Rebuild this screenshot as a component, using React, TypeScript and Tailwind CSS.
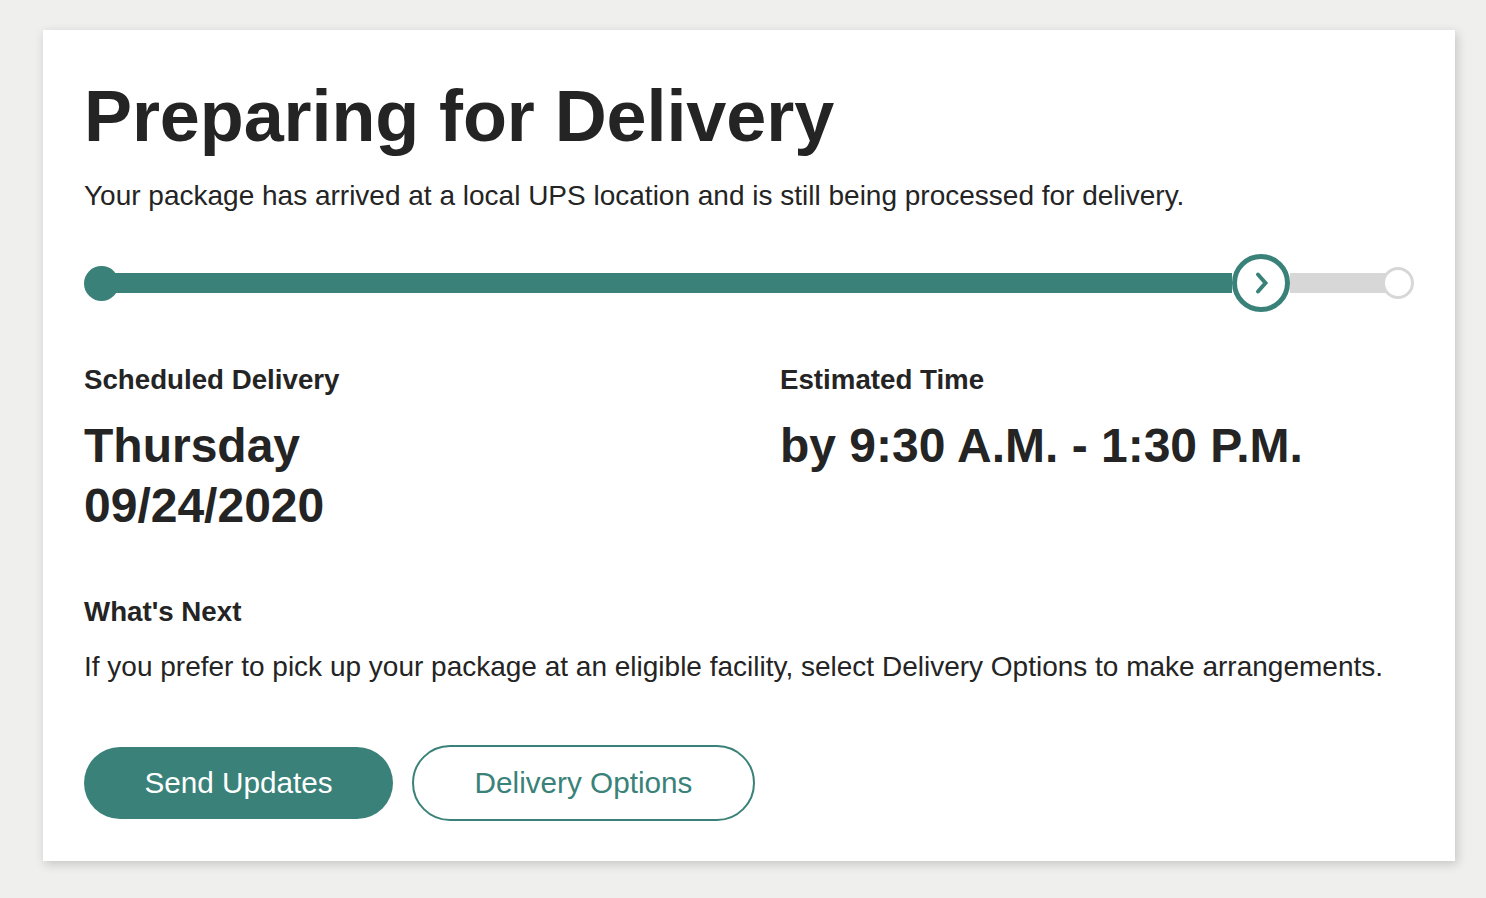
const teal = "#3a8279"

function Progress() {
  return (
    <div className="flex h-[58px] items-center">
      <div className="h-[35px] w-[35px] shrink-0 rounded-full bg-[#3a8279]" />
      <div className="-ml-2 h-5 flex-1 bg-[#3a8279]" />
      <div className="flex h-[58px] w-[58px] shrink-0 items-center justify-center rounded-full border-[5px] border-[#3a8279] bg-white">
        <svg width="20" height="24" viewBox="0 0 20 24" fill="none" className="ml-[2px]">
          <polyline
            points="6,3.5 13.5,12 6,20.5"
            stroke={teal}
            strokeWidth="4"
            strokeLinecap="round"
            strokeLinejoin="miter"
          />
        </svg>
      </div>
      <div className="h-5 w-[96px] shrink-0 bg-[#d7d7d7]" />
      <div className="-ml-1 h-8 w-8 shrink-0 rounded-full border-[3px] border-[#d7d7d7] bg-white" />
    </div>
  )
}

export default function App() {
  return (
    <div className="min-h-screen bg-[#efefee] pl-[43px] pt-[30px] font-['Liberation_Sans',Arial,sans-serif] text-[#242424]">
      <div className="w-[1412px] bg-white px-[41px] pb-[40px] pt-[46px] shadow-[2px_3px_10px_rgba(0,0,0,0.18)]">
        <h1 className="text-[72px] font-bold leading-[80px] tracking-[-0.1px]">Preparing for Delivery</h1>
        <p className="mt-[24px] text-[28px] leading-[32px]">
          Your package has arrived at a local UPS location and is still being processed for delivery.
        </p>

        <div className="mt-[42px]">
          <Progress />
        </div>

        <div className="mt-[52px] grid grid-cols-[696px_1fr]">
          <div>
            <div className="text-[27.7px] font-bold leading-[32px]">Scheduled Delivery</div>
            <div className="mt-[20px] text-[48px] font-bold leading-[60px]">
              Thursday
              <br />
              09/24/2020
            </div>
          </div>
          <div>
            <div className="text-[27.7px] font-bold leading-[32px]">Estimated Time</div>
            <div className="mt-[20px] text-[48px] font-bold leading-[60px]">by 9:30 A.M. - 1:30 P.M.</div>
          </div>
        </div>

        <div className="mt-[60px] text-[27.7px] font-bold leading-[32px]">What's Next</div>
        <p className="mt-[23px] text-[28px] leading-[32px]">
          If you prefer to pick up your package at an eligible facility, select Delivery Options to make arrangements.
        </p>

        <div className="mt-[62px] flex items-center gap-[19px]">
          <button className="flex h-[72px] w-[309px] items-center justify-center rounded-full bg-[#3a8279] text-[29.7px] text-white">
            Send Updates
          </button>
          <button className="flex h-[76px] w-[343px] items-center justify-center rounded-full border-2 border-[#3a8279] bg-white text-[29.7px] text-[#3a8279]">
            Delivery Options
          </button>
        </div>
      </div>
    </div>
  )
}
